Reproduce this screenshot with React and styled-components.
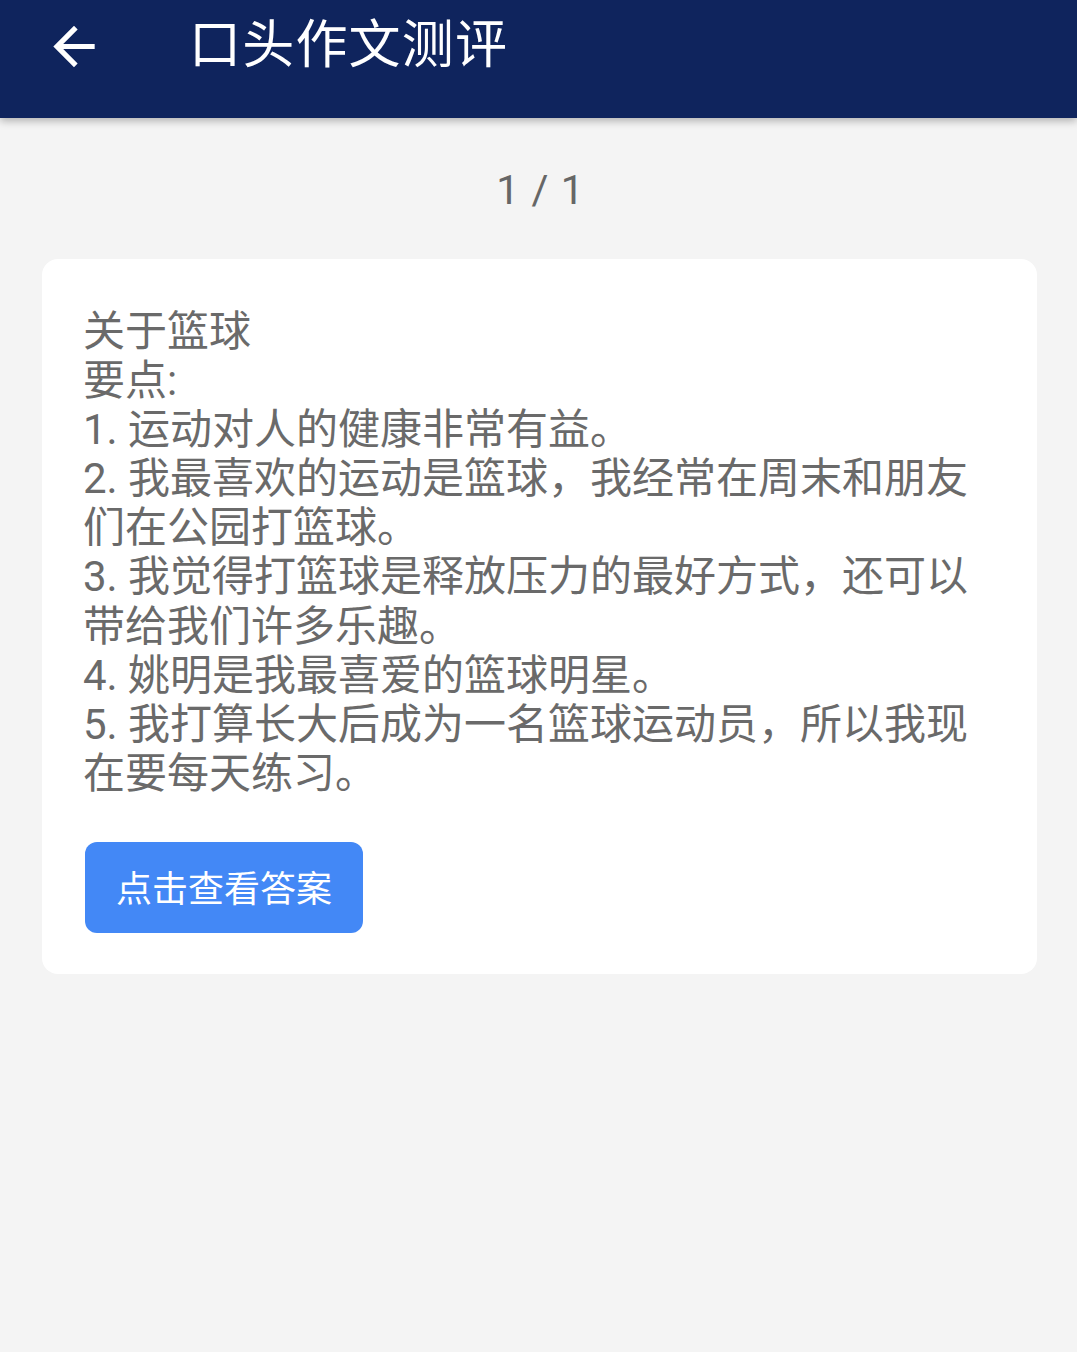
import React from "react";
import styled, { createGlobalStyle } from "styled-components";

const Global = createGlobalStyle`
  html, body { margin: 0; padding: 0; background: #f4f4f4; }
  body { font-family: Roboto, "Noto Sans CJK SC", sans-serif; }
  * { box-sizing: border-box; }
`;

const Page = styled.div`
  min-height: 1352px;
  background: #f4f4f4;
`;

const Header = styled.header`
  height: 118px;
  background: #0f245d;
  box-shadow: 0 3px 8px rgba(0, 0, 0, 0.28);
  position: relative;
  z-index: 1;
`;

const Toolbar = styled.div`
  height: 92px;
  display: flex;
  align-items: center;
  padding-left: 43px;
`;

const BackButton = styled.button`
  width: 62px;
  height: 62px;
  padding: 0;
  border: 0;
  background: transparent;
  color: #fff;
  display: flex;
  align-items: center;
  justify-content: center;
`;

const Title = styled.h1`
  margin: 0 0 0 84px;
  color: #fff;
  font-size: 52px;
  font-weight: 400;
  line-height: 1;
  letter-spacing: 1.2px;
  font-family: Roboto, "Noto Sans CJK SC", sans-serif;
`;

const Counter = styled.div`
  margin-top: 48px;
  padding-left: 4px;
  text-align: center;
  color: #666;
  font-size: 41px;
  line-height: 49px;
  letter-spacing: 1px;
`;

const Card = styled.section`
  margin: 44px 40px 0 42px;
  background: #fff;
  border-radius: 16px;
  padding: 48px 43px 41px 41px;
`;

const Body = styled.div`
  color: #6a6a6a;
  font-size: 42px;
  line-height: 49.1px;
`;

const Line = styled.div``;

const AnswerButton = styled.button`
  margin: 44px 0 0 2px;
  height: 91px;
  padding: 6px 31px 0;
  border: 0;
  border-radius: 12px;
  background: #4388f6;
  color: #fff;
  font-family: Roboto, "Noto Sans CJK SC", sans-serif;
  font-size: 36px;
  line-height: 1;
  cursor: pointer;
`;

const lines = [
  "关于篮球",
  "要点:",
  "1. 运动对人的健康非常有益。",
  "2. 我最喜欢的运动是篮球，我经常在周末和朋友们在公园打篮球。",
  "3. 我觉得打篮球是释放压力的最好方式，还可以带给我们许多乐趣。",
  "4. 姚明是我最喜爱的篮球明星。",
  "5. 我打算长大后成为一名篮球运动员，所以我现在要每天练习。",
];

export default function App() {
  return (
    <Page>
      <Global />
      <Header>
        <Toolbar>
          <BackButton aria-label="back">
            <svg width="63" height="63" viewBox="0 0 24 24" fill="currentColor">
              <path d="M20 11H7.83l5.59-5.59L12 4l-8 8 8 8 1.41-1.41L7.83 13H20v-2z" />
            </svg>
          </BackButton>
          <Title>口头作文测评</Title>
        </Toolbar>
      </Header>
      <Counter>1 / 1</Counter>
      <Card>
        <Body>
          {lines.map((l, i) => (
            <Line key={i}>{l}</Line>
          ))}
        </Body>
        <AnswerButton>点击查看答案</AnswerButton>
      </Card>
    </Page>
  );
}
